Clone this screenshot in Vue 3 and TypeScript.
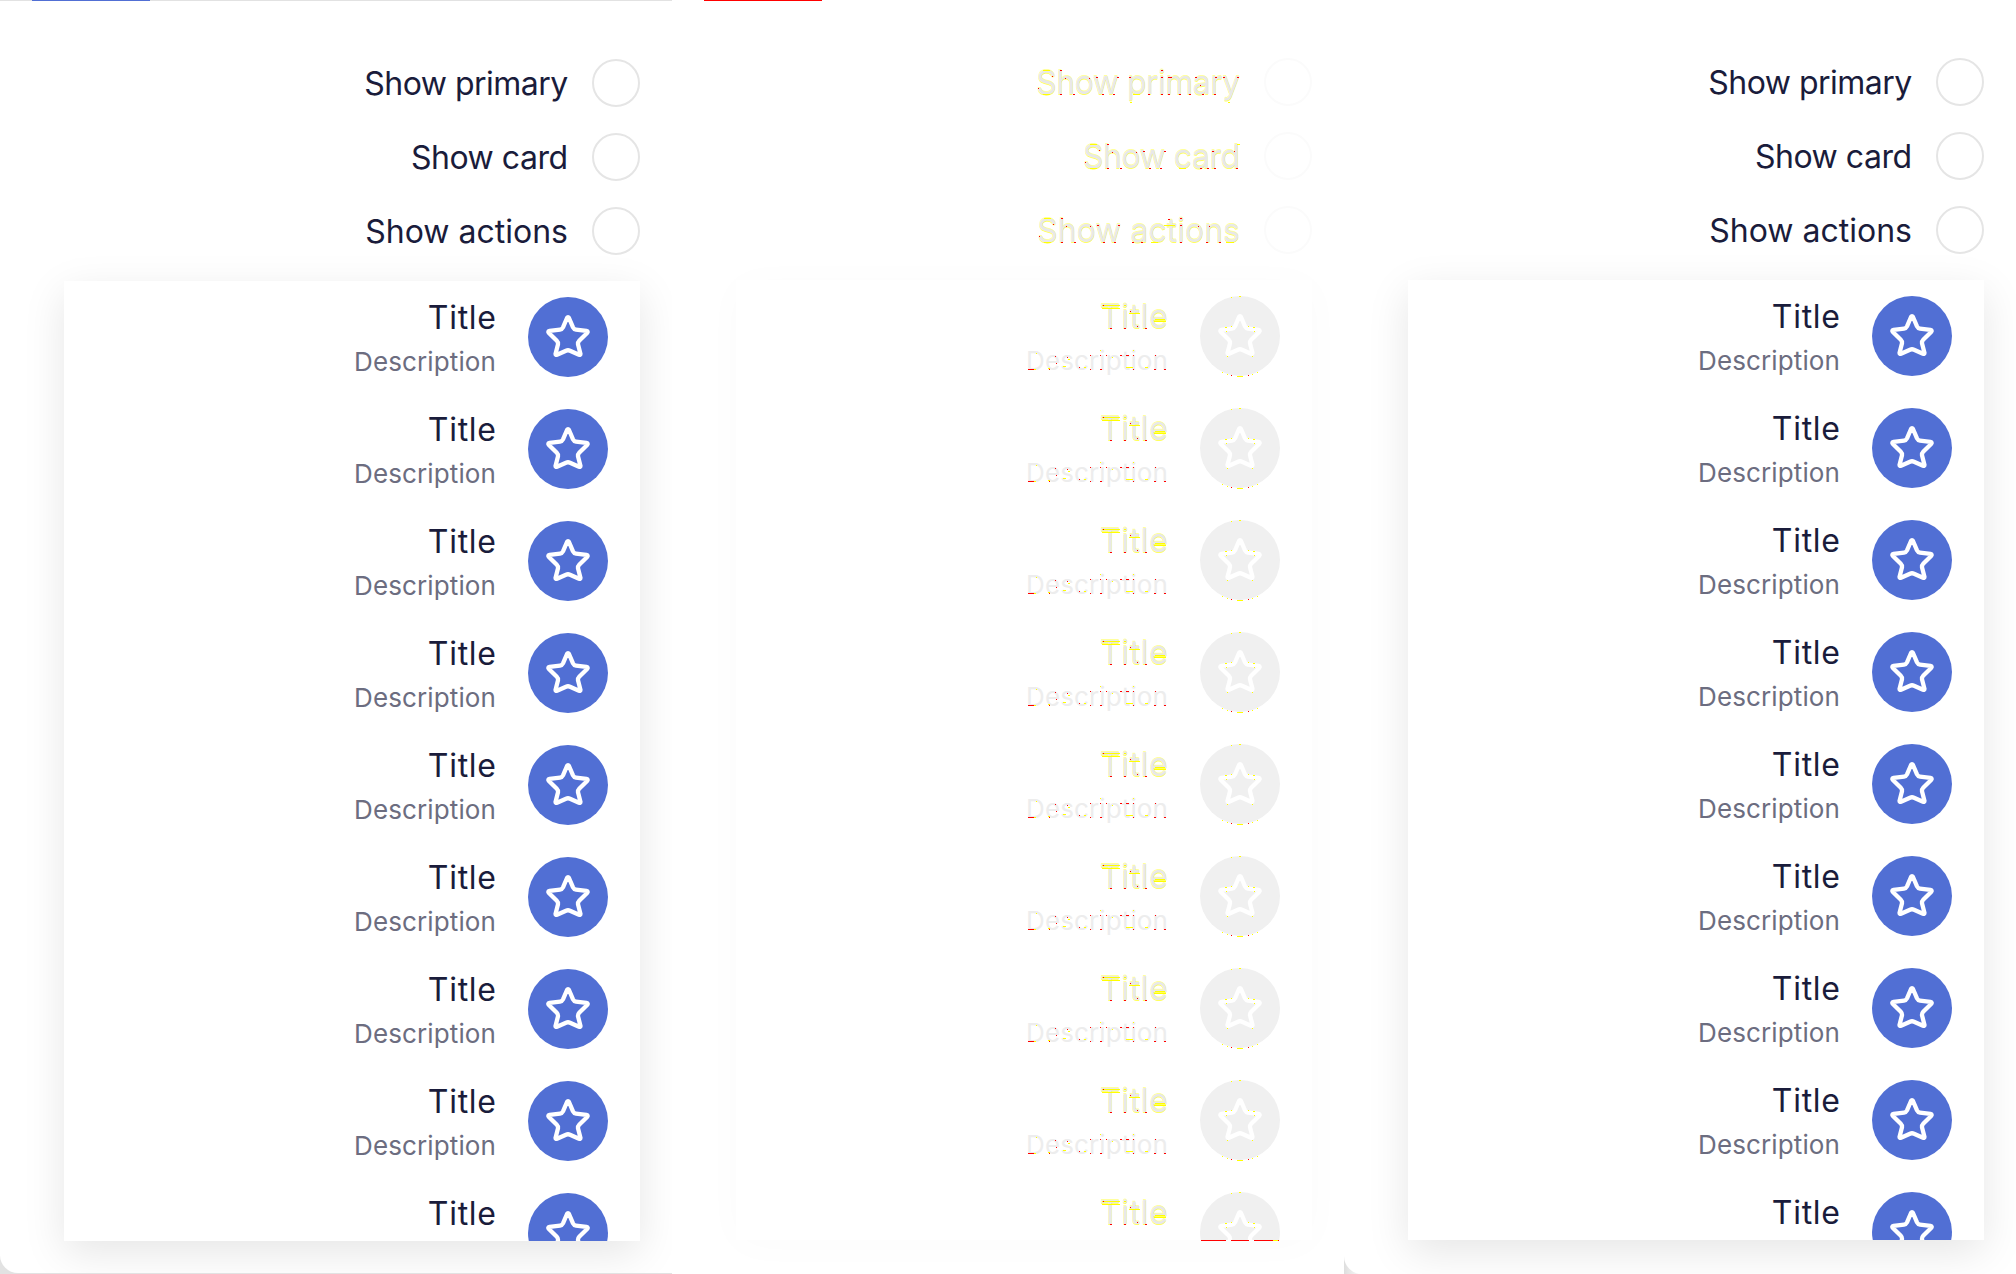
<script setup lang="ts">
interface Dots { w: number; red: string; yellow: string }
interface Option { label: string; cls: string; dots: Dots }

const options: Option[] = [
  {
    label: 'Show primary', cls: 'primary',
    dots: {
      w: 202,
      red: 'M22 12.5h2M58 19.5h2M79 19.5h2M91 19.5h2M123 12.5h2M123 19.5h2M130 19.5h4M157 19.5h2M177 19.5h2M185 19.5h2M199 19.5h2M22 36.5h2M35 36.5h2M64 36.5h2M75 36.5h2M110 36.5h2M123 36.5h2M130 36.5h2M141 36.5h2M151 36.5h2M164 36.5h2M176 36.5h2M0 30.5h1M14 18.5h1M27 20.5h1M51 20.5h1M162 27.5h1',
      yellow: 'M5 12.5h7M5 36.5h7M95 36.5h7M92 44.5h2M190 44.5h2',
    },
  },
  {
    label: 'Show card', cls: 'card-label',
    dots: {
      w: 155,
      red: 'M22 12.5h2M58 19.5h2M79 19.5h2M22 36.5h2M35 36.5h2M64 36.5h2M75 36.5h2M115 36.5h2M122 36.5h2M129 36.5h2M127 19.5h2M151 36.5h2M149 19.5h1M0 30.5h1M14 18.5h1M27 20.5h1M51 20.5h1',
      yellow: 'M5 12.5h7M5 36.5h7M94 36.5h7M152 12.5h3',
    },
  },
  {
    label: 'Show actions', cls: 'actions',
    dots: {
      w: 201,
      red: 'M22 12.5h2M58 19.5h2M79 19.5h2M22 36.5h2M35 36.5h2M64 36.5h2M75 36.5h2M93 36.5h2M102 36.5h2M129 13.5h2M141 12.5h2M141 19.5h2M141 36.5h2M167 36.5h2M180 36.5h2M0 30.5h1M14 18.5h1M27 20.5h1M51 20.5h1M159 20.5h1M170 20.5h1',
      yellow: 'M5 12.5h7M5 36.5h7M112 36.5h7M125 19.5h11M187 36.5h8',
    },
  },
]

const panels = ['before', 'diff', 'after']
</script>

<template>
  <main class="compare">
    <section v-for="kind in panels" :key="kind" class="panel" :class="kind">
      <div class="tabs"><i></i></div>
      <div class="sheet">
        <div v-for="o in options" :key="o.label" class="option">
          <span class="label">
            <span class="txt" :class="o.cls">{{ o.label }}</span>
            <svg v-if="kind === 'diff'" class="dots" :width="o.dots.w" height="48">
              <path :d="o.dots.yellow" stroke="#ff0" />
              <path :d="o.dots.red" stroke="red" />
            </svg>
          </span>
          <span class="radio"></span>
        </div>
        <div class="card">
          <div v-for="n in 9" :key="n" class="item">
            <div class="copy">
              <div class="title">
                <span class="txt">Title</span>
                <svg v-if="kind === 'diff'" class="dots" width="66" height="40">
                  <path d="M0 9.5h18M0 12.5h18M22 9.5h2M27 17.5h11M53 23.5h10M52 25.5h12" stroke="#ff0" />
                  <path d="M1 9.5h1M8 32.5h2M22 32.5h2M43 32.5h2M28 15.5h1M35 30.5h1" stroke="red" />
                </svg>
              </div>
              <div v-if="n < 9" class="desc">
                <span class="txt">Description</span>
                <svg v-if="kind === 'diff'" class="dots" width="140" height="40">
                  <path d="M6 29.5h2M8 13.5h1M20 28.5h2M35 26.5h3M40 19.5h2M56 27.5h2M72 10.5h1M98 27.5h7M105 10.5h1M117 27.5h3M84 17.5h1" stroke="#ff0" />
                  <path d="M0 29.5h6M21 29.5h1M62 29.5h1M72 29.5h2M105 29.5h1M126 29.5h2M136 29.5h2M27 16.5h1M28 23.5h1M39 17.5h1M51 27.5h1M62 15.5h1M72 15.5h1M78 15.5h1M92 15.5h2M98 15.5h3M105 15.5h1M127 15.5h1" stroke="red" />
                </svg>
              </div>
            </div>
            <div class="avatar">
              <svg width="80" height="80" viewBox="0 0 80 80" fill="none">
                <path class="star" d="M39 21Q40 19.4 41 21L45 30.4Q45.9 32.3 48 32.6L58.4 33.9Q60.6 34.4 59.1 36L51.2 43.8Q49.8 45.2 50 47.2L52.5 57Q52.6 58.4 51 57.7L42 53.7Q40 52.8 38 53.7L29 57.7Q27.4 58.4 27.5 57L30 47.2Q30.2 45.2 28.8 43.8L20.9 36Q19.4 34.4 21.6 33.9L32 32.6Q34.1 32.3 35 30.4Z" />
                <g v-if="kind === 'diff'" shape-rendering="crispEdges">
                  <path d="M39 .5h2M31 1.5h1M22 76.5h1M57 76.5h1M27 78.5h1M52 78.5h1M37 80.5h6M25 31.5h2M53 31.5h2M31 30.5h1M48 30.5h1M26 35.5h1M54 35.5h1M27 60.5h1M52 60.5h1" stroke="#ff0" />
                  <path d="M31 79.5h1M48 79.5h1" stroke="red" />
                </g>
              </svg>
            </div>
          </div>
          <svg v-if="kind === 'diff'" class="edge" width="80" height="1"><path d="M1 .5h25M31 .5h18M54 .5h19M78 .5h1" stroke="red" /><path d="M73 .5h5" stroke="#ff0" /></svg>
        </div>
      </div>
    </section>
  </main>
</template>

<style>
body { margin: 0; background: #fff; overflow: hidden; }
</style>

<style scoped>
* { box-sizing: border-box; }
.compare { display: flex; width: 2016px; height: 1274px; font-family: Inter, "Noto Sans", sans-serif; background: #fff; }
.panel { width: 672px; height: 1274px; display: flex; flex-direction: column; overflow: hidden; }
.before { background: #e2e2e2; }
.after { background: linear-gradient(to right, #dedede, #fff 20px); }
.tabs { height: 1px; background: #fff; padding-left: 32px; flex: none; }
.tabs i { display: block; width: 118px; height: 1px; }
.before .tabs { background: #e2e2e2; }
.before .tabs i { background: #516fd4; }
.diff .tabs i { background: red; }
.sheet { height: 1272px; flex: none; background: #fff; padding: 58px 32px 0 64px; border-bottom-left-radius: 18px; overflow: hidden; }
.diff .sheet, .after .sheet { padding-top: 57px; }
.diff .sheet { border-radius: 0; }
.after .sheet { height: 1273px; }
.option { height: 48px; margin-bottom: 26px; display: flex; justify-content: flex-end; align-items: center; gap: 24px; }
.label, .title, .desc { position: relative; color: #1a1c3b; white-space: nowrap; }
.label { height: 48px; line-height: 50px; font-size: 32px; }
.txt { display: inline-block; }
.primary { letter-spacing: -.53px; margin-right: .4px; }
.card-label { letter-spacing: -.48px; margin-right: .4px; }
.radio { width: 48px; height: 48px; border: 2px solid #e5e5e5; border-radius: 50%; }
.card { position: relative; height: 960px; background: #fff; box-shadow: 0 12px 40px rgba(0, 0, 0, .1); display: flex; flex-direction: column; }
.item { height: 112px; flex: none; padding: 16px 32px; display: flex; justify-content: flex-end; gap: 32px; }
.item:nth-child(9) { height: 64px; padding-bottom: 0; overflow: hidden; }
.copy { display: flex; flex-direction: column; align-items: flex-end; }
.title { height: 40px; font-size: 32px; line-height: 42px; }
.title .txt { letter-spacing: .75px; margin-right: -.75px; }
.desc { height: 40px; margin-top: 4px; font-size: 26px; line-height: 42px; color: #6c6d80; }
.desc .txt { letter-spacing: .12px; }
.avatar { width: 80px; height: 80px; flex: none; border-radius: 50%; background: #516fd4; }
.avatar svg { display: block; overflow: visible; }
.star { stroke: #fff; stroke-width: 4.3; stroke-linejoin: round; }
.dots { position: absolute; right: 0; top: 0; shape-rendering: crispEdges; }
.edge { position: absolute; right: 32px; bottom: -1px; }
.diff .label, .diff .title { color: #e8e8e8; text-shadow: 0 1px 0 rgba(255, 255, 0, .65), 0 -1px 0 rgba(255, 255, 0, .4); }
.diff .desc { color: #ededed; }
.diff .radio { border-color: #fbfbfb; }
.diff .avatar { background: #f0f0f0; }
.diff .card { box-shadow: 0 4px 40px rgba(0, 0, 0, .02); }
</style>
